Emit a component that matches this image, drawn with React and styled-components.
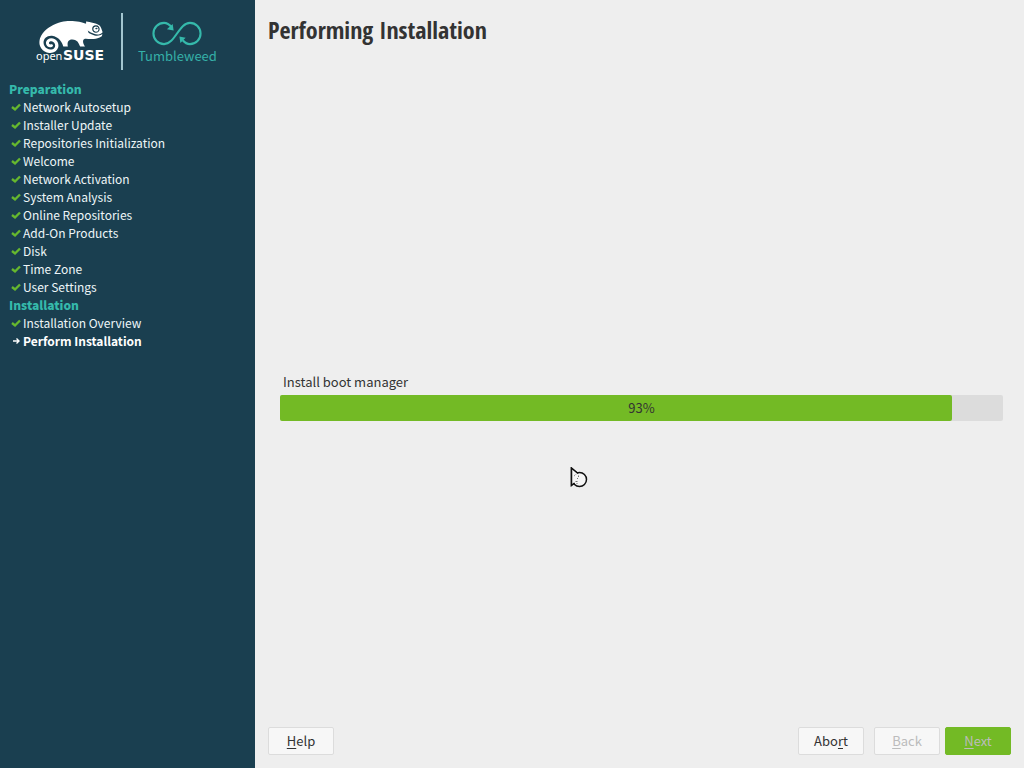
import React from "react";
import styled, { createGlobalStyle } from "styled-components";
import { FaSuse } from "react-icons/fa";

const preparationSteps = [
  "Network Autosetup",
  "Installer Update",
  "Repositories Initialization",
  "Welcome",
  "Network Activation",
  "System Analysis",
  "Online Repositories",
  "Add-On Products",
  "Disk",
  "Time Zone",
  "User Settings",
];

const stages = [
  {
    title: "Preparation",
    steps: preparationSteps.map((name) => ({ name, done: true })),
  },
  {
    title: "Installation",
    steps: [
      { name: "Installation Overview", done: true },
      { name: "Perform Installation", done: false },
    ],
  },
];

const OpenSuseLogo = () => (
  <svg width="70" height="56" viewBox="0 0 70 56" aria-label="openSUSE">
    <FaSuse x="3" y="-8" size="64" color="#fff" />
    <text x="0" y="47" fill="#fff" fontFamily="Noto Sans, sans-serif" fontSize="11">
      open
    </text>
    <text
      x="27"
      y="47"
      fill="#fff"
      fontFamily="DejaVu Sans, sans-serif"
      fontSize="14"
      fontWeight="bold"
    >
      SUSE
    </text>
  </svg>
);

const InfinityLogo = () => (
  <svg width="50" height="25" viewBox="0 0 52 26" aria-hidden="true">
    <path
      d="M32 20C34 22.500 36.500 24 39.500 24A11 11 0 0 0 39.500 2C28 2 24 24 12.500 24A11 11 0 0 1 12.500 2C15.500 2 18 3.500 20.500 6.500"
      fill="none"
      stroke="#35b9ab"
      strokeWidth="2.200"
    />
    <path d="M22.500 10L15.500 8.500L21.500 3Z" fill="#35b9ab" />
    <path d="M28.500 16L35 17.500L29.500 23Z" fill="#35b9ab" />
  </svg>
);

const CheckMark = () => (
  <svg width="14" height="10" viewBox="0 0 14 10" aria-hidden="true">
    <path d="M3 5L6 7.500L11 2.500" fill="none" stroke="#66b82e" strokeWidth="2.400" />
  </svg>
);

const ArrowMark = () => (
  <svg width="14" height="10" viewBox="0 0 14 10" aria-hidden="true">
    <path d="M4 5H10M7.500 2.500L10 5L7.500 7.500" fill="none" stroke="#fff" strokeWidth="1.400" />
  </svg>
);

const BusyCursor = () => (
  <Pointer width="20" height="24" viewBox="0 0 20 24" aria-hidden="true">
    <path d="M1.500 1.500V18L6 15L11 9Z" fill="#fff" stroke="#111" strokeWidth="1.500" />
    <circle cx="9.500" cy="12.500" r="7" fill="#f6f6f6" stroke="#111" strokeWidth="1.500" />
    <path d="M1.500 1.500V18L4 16L4.500 8L8 7Z" fill="#f6f6f6" />
    <path d="M8 6.500L1.500 1V18.500L4.500 16" fill="none" stroke="#111" strokeWidth="1.500" />
    <path d="M5.500 14.500h2M7 11l1 1M8.500 8.500v1.500M6.500 16.500h1" stroke="#777" strokeWidth="1" />
  </Pointer>
);

const App = () => {
  const progress = 93;

  return (
    <>
      <GlobalStyle />
      <Installer>
        <Sidebar>
          <Branding>
            <OpenSuseLogo />
            <Divider />
            <Product>
              <InfinityLogo />
              <span>Tumbleweed</span>
            </Product>
          </Branding>
          {stages.map((stage) => (
            <section key={stage.title}>
              <StageTitle>{stage.title}</StageTitle>
              <StepList>
                {stage.steps.map((step) => (
                  <Step key={step.name} $current={!step.done}>
                    {step.done ? <CheckMark /> : <ArrowMark />}
                    {step.name}
                  </Step>
                ))}
              </StepList>
            </section>
          ))}
        </Sidebar>
        <Main>
          <Title>Performing Installation</Title>
          <Content>
            <ProgressLabel htmlFor="progress">Install boot manager</ProgressLabel>
            <ProgressWrap>
              <ProgressBar id="progress" value={progress} max="100" />
              <Percent>{progress}%</Percent>
            </ProgressWrap>
          </Content>
          <Footer>
            <Button>
              <u>H</u>elp
            </Button>
            <Spacer />
            <Button>
              Abo<u>r</u>t
            </Button>
            <ButtonPair>
              <Button disabled>
                <u>B</u>ack
              </Button>
              <Button $primary disabled>
                <u>N</u>ext
              </Button>
            </ButtonPair>
          </Footer>
        </Main>
        <BusyCursor />
      </Installer>
    </>
  );
};

const GlobalStyle = createGlobalStyle`
  * {
    box-sizing: border-box;
  }

  body {
    margin: 0;
    font-family: "Noto Sans CJK SC", sans-serif;
    font-size: 13px;
    line-height: 18px;
    color: #333;
  }
`;

const Installer = styled.div`
  display: flex;
  min-height: 100vh;
  background-color: #eee;
`;

const Sidebar = styled.aside`
  flex: none;
  width: 255px;
  padding: 13px 9px;
  background-color: #1a3f50;
  color: #eef6f8;
  font-size: 12px;
`;

const Branding = styled.div`
  display: flex;
  padding-left: 27px;
  margin-bottom: 10px;
`;

const Divider = styled.div`
  width: 2px;
  height: 57px;
  margin: 0 15px;
  background-color: #a3c6d0;
`;

const Product = styled.div`
  display: flex;
  flex-direction: column;
  align-items: center;
  padding-top: 8px;
  color: #35b0a8;
  font-size: 13px;
  line-height: 20px;
`;

const StageTitle = styled.h2`
  margin: 0;
  color: #35b9ab;
  font-size: 12px;
  line-height: 18px;
  font-weight: 900;
`;

const StepList = styled.ol`
  margin: 0;
  padding: 0;
  list-style: none;
`;

const Step = styled.li`
  display: flex;
  align-items: center;
  color: ${(props) => (props.$current ? "#fff" : "inherit")};
  font-weight: ${(props) => (props.$current ? "bold" : "normal")};
`;

const Main = styled.main`
  display: flex;
  flex: 1;
  flex-direction: column;
  padding: 13px;
`;

const Title = styled.h1`
  margin: 0;
  font-family: "Open Sans Condensed", "Open Sans", sans-serif;
  font-size: 24px;
  line-height: 34px;
  font-weight: bold;
`;

const Content = styled.div`
  display: flex;
  flex: 1;
  flex-direction: column;
  justify-content: center;
  padding: 20px 8px 0 12px;
`;

const ProgressLabel = styled.label`
  padding: 0 3px;
  margin-bottom: 4px;
`;

const ProgressWrap = styled.div`
  position: relative;
  height: 26px;
`;

const ProgressBar = styled.progress`
  display: block;
  width: 100%;
  height: 100%;
  appearance: none;
  border: none;

  &::-webkit-progress-bar {
    background-color: #dcdcdc;
    border-radius: 2px;
  }

  &::-webkit-progress-value {
    background-color: #73ba25;
    border-radius: 2px;
  }
`;

const Percent = styled.span`
  position: absolute;
  inset: 0;
  line-height: 26px;
  text-align: center;
`;

const Footer = styled.footer`
  display: flex;
  gap: 10px;
`;

const Spacer = styled.div`
  flex: 1;
`;

const ButtonPair = styled.div`
  display: flex;
  gap: 5px;
`;

const Button = styled.button`
  width: 66px;
  height: 28px;
  padding: 0;
  border: 1px solid ${(props) => (props.$primary ? "#73ba25" : "#dcdcdc")};
  border-radius: 2px;
  background-color: ${(props) => (props.$primary ? "#73ba25" : "#f7f7f7")};
  color: #333;
  font: inherit;

  u {
    text-underline-offset: 2px;
  }

  &:disabled {
    color: #bcbcbc;
  }
`;

const Pointer = styled.svg`
  position: absolute;
  left: 570px;
  top: 467px;
  pointer-events: none;
`;

export default App;
